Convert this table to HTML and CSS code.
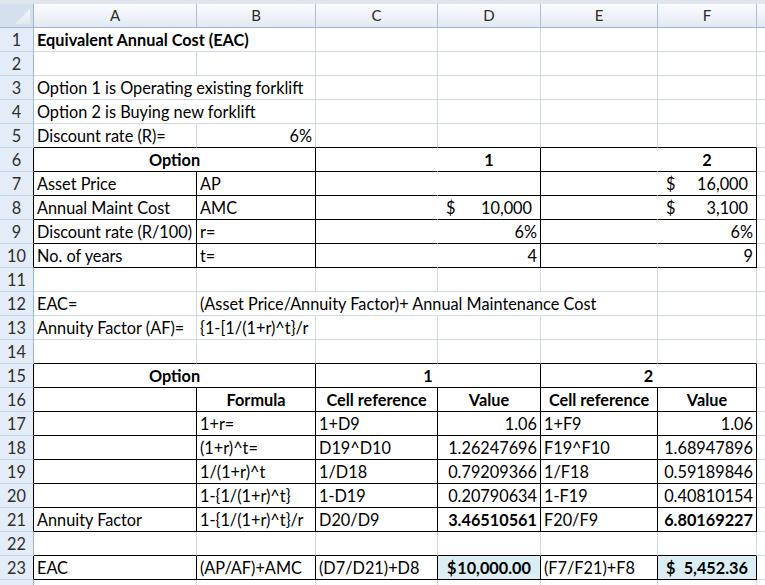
FILE: index.html
```html
<!DOCTYPE html>
<html>
<head>
<meta charset="utf-8">
<link rel="stylesheet" href="styles.css">
</head>
<body>
<div class="top"></div>
<div class="sheet">
  <div class="hd corner"></div>
  <div class="hd">A</div><div class="hd">B</div><div class="hd">C</div><div class="hd">D</div><div class="hd">E</div><div class="hd">F</div><div class="hd last"></div>

  <div class="rh">1</div>
  <div class="c nr b">Equivalent Annual Cost (EAC)</div><div class="c"></div><div class="c"></div><div class="c"></div><div class="c"></div><div class="c"></div><div class="c g"></div>

  <div class="rh">2</div>
  <div class="c"></div><div class="c"></div><div class="c"></div><div class="c"></div><div class="c"></div><div class="c"></div><div class="c g"></div>

  <div class="rh">3</div>
  <div class="c nr">Option 1 is Operating existing forklift</div><div class="c"></div><div class="c"></div><div class="c"></div><div class="c"></div><div class="c"></div><div class="c g"></div>

  <div class="rh">4</div>
  <div class="c nr">Option 2 is Buying new forklift</div><div class="c"></div><div class="c"></div><div class="c"></div><div class="c"></div><div class="c"></div><div class="c g"></div>

  <div class="rh">5</div>
  <div class="c kb">Discount rate (R)=</div><div class="c kb r">6%</div><div class="c kb"></div><div class="c kb"></div><div class="c kb"></div><div class="c kb"></div><div class="c g"></div>

  <div class="rh kl">6</div>
  <div class="c kb kr b ctr s2">Option</div><div class="c kb nr"></div><div class="c kb kr b ctr">1</div><div class="c kb nr"></div><div class="c kb kr b ctr">2</div><div class="c g"></div>

  <div class="rh kl">7</div>
  <div class="c kb kr">Asset Price</div><div class="c kb kr">AP</div><div class="c kb nr"></div><div class="c kb kr"></div><div class="c kb nr"></div><div class="c kb kr acc"><span>$</span><span>16,000</span></div><div class="c g"></div>

  <div class="rh kl">8</div>
  <div class="c kb kr">Annual Maint Cost</div><div class="c kb kr">AMC</div><div class="c kb nr"></div><div class="c kb kr acc"><span>$</span><span>10,000</span></div><div class="c kb nr"></div><div class="c kb kr acc"><span>$</span><span>3,100</span></div><div class="c g"></div>

  <div class="rh kl">9</div>
  <div class="c kb kr">Discount rate (R/100)</div><div class="c kb kr">r=</div><div class="c kb nr"></div><div class="c kb kr r">6%</div><div class="c kb nr"></div><div class="c kb kr r">6%</div><div class="c g"></div>

  <div class="rh kl">10</div>
  <div class="c kb kr">No. of years</div><div class="c kb kr">t=</div><div class="c kb nr"></div><div class="c kb kr r">4</div><div class="c kb nr"></div><div class="c kb kr r">9</div><div class="c g"></div>

  <div class="rh">11</div>
  <div class="c"></div><div class="c"></div><div class="c"></div><div class="c"></div><div class="c"></div><div class="c"></div><div class="c g"></div>

  <div class="rh">12</div>
  <div class="c">EAC=</div><div class="c nr">(Asset Price/Annuity Factor)+ Annual Maintenance Cost</div><div class="c nr"></div><div class="c nr"></div><div class="c"></div><div class="c"></div><div class="c g"></div>

  <div class="rh">13</div>
  <div class="c">Annuity Factor (AF)=</div><div class="c">{1-[1/(1+r)^t}/r</div><div class="c"></div><div class="c"></div><div class="c"></div><div class="c"></div><div class="c g"></div>

  <div class="rh">14</div>
  <div class="c kb"></div><div class="c kb"></div><div class="c kb"></div><div class="c kb"></div><div class="c kb"></div><div class="c kb"></div><div class="c g"></div>

  <div class="rh kl">15</div>
  <div class="c kb kr b ctr s2">Option</div><div class="c kb kr b ctr s2">1</div><div class="c kb kr b ctr s2">2</div><div class="c g"></div>

  <div class="rh kl">16</div>
  <div class="c kb kr"></div><div class="c kb kr b ctr">Formula</div><div class="c kb kr b ctr">Cell reference</div><div class="c kb kr b ctr">Value</div><div class="c kb kr b ctr">Cell reference</div><div class="c kb kr b ctr">Value</div><div class="c g"></div>

  <div class="rh kl">17</div>
  <div class="c kb kr"></div><div class="c kb kr">1+r=</div><div class="c kb kr">1+D9</div><div class="c kb kr r">1.06</div><div class="c kb kr">1+F9</div><div class="c kb kr r">1.06</div><div class="c g"></div>

  <div class="rh kl">18</div>
  <div class="c kb kr"></div><div class="c kb kr">(1+r)^t=</div><div class="c kb kr">D19^D10</div><div class="c kb kr r">1.26247696</div><div class="c kb kr">F19^F10</div><div class="c kb kr r">1.68947896</div><div class="c g"></div>

  <div class="rh kl">19</div>
  <div class="c kb kr"></div><div class="c kb kr">1/(1+r)^t</div><div class="c kb kr">1/D18</div><div class="c kb kr r">0.79209366</div><div class="c kb kr">1/F18</div><div class="c kb kr r">0.59189846</div><div class="c g"></div>

  <div class="rh kl">20</div>
  <div class="c kb kr"></div><div class="c kb kr">1-{1/(1+r)^t}</div><div class="c kb kr">1-D19</div><div class="c kb kr r">0.20790634</div><div class="c kb kr">1-F19</div><div class="c kb kr r">0.40810154</div><div class="c g"></div>

  <div class="rh kl">21</div>
  <div class="c kb kr">Annuity Factor</div><div class="c kb kr">1-{1/(1+r)^t}/r</div><div class="c kb kr">D20/D9</div><div class="c kb kr r b">3.46510561</div><div class="c kb kr">F20/F9</div><div class="c kb kr r b">6.80169227</div><div class="c g"></div>

  <div class="rh">22</div>
  <div class="c kb"></div><div class="c kb"></div><div class="c kb"></div><div class="c kb"></div><div class="c kb"></div><div class="c kb"></div><div class="c g"></div>

  <div class="rh kl">23</div>
  <div class="c kb kr">EAC</div><div class="c kb kr">(AP/AF)+AMC</div><div class="c kb kr">(D7/D21)+D8</div><div class="c kb kr acc b fill eac1"><span>$</span><span>10,000.00</span></div><div class="c kb kr">(F7/F21)+F8</div><div class="c kb kr acc b fill"><span>$</span><span>5,452.36</span></div><div class="c g"></div>

  <div class="rh"></div>
  <div class="c"></div><div class="c"></div><div class="c"></div><div class="c"></div><div class="c"></div><div class="c"></div><div class="c g"></div>
</div>
</body>
</html>
```

FILE: styles.css
```css
* { box-sizing: border-box; margin: 0; padding: 0; }
html, body { background: #fff; }
body {
  margin: 0;
  font-family: Lato, "Liberation Sans", sans-serif;
  font-size: 16.3px;
  color: #000;
  overflow: hidden;
}
.top {
  height: 4px;
  background: #dfe5ec;
}
.sheet {
  display: grid;
  grid-template-columns: 34px 163px 119px 122px 103px 117px 99px 8px;
  grid-auto-rows: 24px;
}
.hd {
  background: linear-gradient(to bottom, #f9fbfd 0%, #eef2f8 55%, #e2e9f2 100%);
  border-right: 1px solid #aebfd3;
  border-bottom: 1px solid #9eb6ce;
  text-align: center;
  font-size: 15px;
  line-height: 23px;
  color: #2b2b2b;
}
.hd.last { border-right: none; }
.corner {
  position: relative;
  background: #d5e0ee;
  border-right: 1px solid #9eb6ce;
}
.corner::after {
  content: "";
  position: absolute;
  right: 3px;
  bottom: 3px;
  width: 15px;
  height: 15px;
  background: linear-gradient(to bottom, #f4f7fb, #e3e9f1);
  clip-path: polygon(100% 0, 100% 100%, 0 100%);
}
.rh {
  background: #e4ecf7;
  border-right: 1px solid #9eb6ce;
  border-bottom: 1px solid #c3d0e0;
  text-align: center;
  line-height: 23px;
  color: #2f2f2f;
}
.rh.kl { border-right-color: #000; }
.c {
  border-right: 1px solid #d0d7e5;
  border-bottom: 1px solid #d0d7e5;
  padding: 0 3px;
  line-height: 23px;
  white-space: nowrap;
  overflow: visible;
}
.c.g { border-right: none; }
.c.kb { border-bottom-color: #000; }
.c.kr { border-right-color: #000; }
.c.nr { border-right-color: transparent; }
.r { text-align: right; }
.ctr { text-align: center; }
.b { font-weight: bold; }
.s2 { grid-column: span 2; }
.acc {
  display: flex;
  justify-content: space-between;
  padding: 0 8px 0 8px;
}
.fill { background: #daeef3; }
.eac1 { padding: 0 9px 0 9px; }
```
